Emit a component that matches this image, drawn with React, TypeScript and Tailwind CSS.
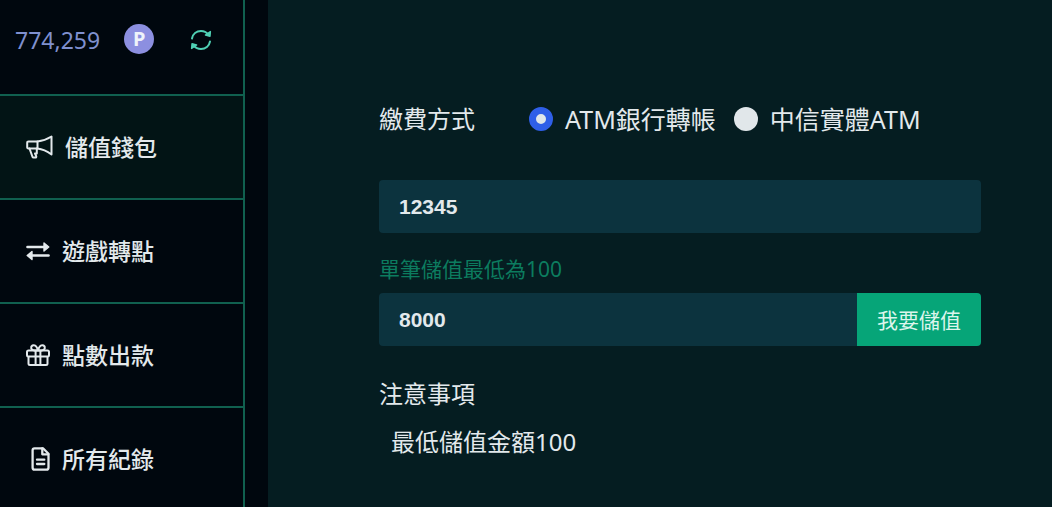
import { useState } from "react";
import type { ReactNode } from "react";

function MegaphoneIcon() {
  return (
    <svg width="27" height="26" viewBox="0 0 27 26" fill="none" stroke="currentColor" strokeWidth="2" strokeLinejoin="round" strokeLinecap="round">
      <path d="M2.500 7.500H11.500V14.500H2.500C1.600 14.500 1.200 14 1.200 13.200V8.800C1.200 7.900 1.600 7.500 2.500 7.500Z" />
      <path d="M11.500 7.500C16 7 21.500 5 25.500 2.500V20.500C21.500 17.500 16 15 11.500 14.500" />
      <path d="M3.500 14.500L6.500 22.800C6.700 23.300 7 23.500 7.500 23.500H9.300C10.200 23.500 10.500 22.900 10.200 22.200L9 19.500H10.800V14.500" />
    </svg>
  );
}

function TransferIcon() {
  return (
    <svg width="24" height="24" viewBox="0 0 24 24" fill="currentColor" stroke="currentColor" strokeLinejoin="round" strokeLinecap="round">
      <path d="M1.500 8H18" strokeWidth="2.600" fill="none" />
      <path d="M18 4L22.800 8L18 12Z" strokeWidth="1.400" />
      <path d="M6 16.500H22.500" strokeWidth="2.600" fill="none" />
      <path d="M6 12.500L1.200 16.500L6 20.500Z" strokeWidth="1.400" />
    </svg>
  );
}

function GiftIcon() {
  return (
    <svg width="24" height="24" viewBox="0 0 24 24" fill="none" stroke="currentColor" strokeWidth="2" strokeLinejoin="round">
      <rect x="1" y="7.500" width="22" height="6" rx="1.500" />
      <path d="M2.500 13.500V20.500C2.500 21.600 3 22 4 22H20C21 22 21.500 21.600 21.500 20.500V13.500" />
      <path d="M9.600 7.500V22M14.400 7.500V22" />
      <path d="M12 7.500C10.500 7.500 5.800 8 5.200 5.200C4.700 2.600 7.600 1.400 9.500 2.800C11 3.900 11.600 6 12 7.500C12.400 6 13 3.900 14.500 2.800C16.400 1.400 19.300 2.600 18.800 5.200C18.200 8 13.500 7.500 12 7.500Z" />
    </svg>
  );
}

function RecordIcon() {
  return (
    <svg width="24" height="24" viewBox="0 0 24 24" fill="none" stroke="currentColor" strokeWidth="2.300" strokeLinejoin="round" strokeLinecap="round">
      <path d="M8.500 1.300H17L22.500 6.800V20.500C22.500 22 21.800 22.700 20.500 22.700H8.500C7.200 22.700 6.600 22 6.600 20.500V3.300C6.600 2 7.200 1.300 8.500 1.300Z" />
      <path d="M16.300 1.500V7.300H22.300" />
      <path d="M11 12.700H18.300M11 17H18.300" />
    </svg>
  );
}

function RefreshIcon() {
  return (
    <svg width="22" height="22" viewBox="0 0 22 22" fill="none" stroke="currentColor" strokeWidth="2" strokeLinecap="round">
      <path d="M2 9.500C2.800 5 6.500 2 11 2C14 2 16.500 3.200 18.200 5.400" />
      <path d="M20 12.500C19.200 17 15.500 20 11 20C8 20 5.500 18.800 3.800 16.600" />
      <path d="M20.400 2.600L20 7.200L15.400 6Z" fill="currentColor" strokeLinejoin="round" strokeWidth="1.400" />
      <path d="M1.600 19.400L2 14.800L6.600 16Z" fill="currentColor" strokeLinejoin="round" strokeWidth="1.400" />
    </svg>
  );
}

interface NavItem {
  label: string;
  icon: ReactNode;
  active?: boolean;
}

const navItems: NavItem[] = [
  { label: "儲值錢包", icon: <MegaphoneIcon />, active: true },
  { label: "遊戲轉點", icon: <TransferIcon /> },
  { label: "點數出款", icon: <GiftIcon /> },
  { label: "所有紀錄", icon: <RecordIcon /> },
];

const methods = [
  { value: "transfer", label: "ATM銀行轉帳" },
  { value: "ctbc", label: "中信實體ATM" },
];

function Sidebar() {
  return (
    <aside className="w-[245px] shrink-0 border-r-2 border-[#10604f]">
      <div className="flex h-[94px] items-start pl-[15px] pt-6 text-[23px] leading-8 text-[#7f90cf]">
        <span>774,259</span>
        <span className="ml-6 flex size-[30px] items-center justify-center rounded-full bg-[#8c8fe0] text-xl font-bold text-[#eef3fa]">
          P
        </span>
        <button type="button" aria-label="重新整理" className="ml-9 flex h-8 items-center text-[#4fd0b4]">
          <RefreshIcon />
        </button>
      </div>
      <nav>
        {navItems.map((item) => (
          <a
            key={item.label}
            href="#"
            className={`flex h-[104px] items-center gap-3 border-t-2 border-[#10604f] pl-[26px] text-[23px] font-medium leading-8 text-[#e3e9ec] ${
              item.active ? "bg-[#021415]" : ""
            }`}
          >
            {item.icon}
            <span>{item.label}</span>
          </a>
        ))}
      </nav>
    </aside>
  );
}

export default function App() {
  const [method, setMethod] = useState("transfer");
  const [account, setAccount] = useState("12345");
  const [amount, setAmount] = useState("8000");

  return (
    <div className="flex h-screen overflow-hidden bg-[#00070e] font-['Noto_Sans','Noto_Sans_CJK_TC',sans-serif]">
      <Sidebar />
      <main className="ml-[23px] min-w-0 flex-1 bg-[#051d21] pl-[111px] pr-[71px] pt-[103px] text-2xl leading-8 text-[#e3e9ec]">
        <form onSubmit={(e) => e.preventDefault()}>
          <fieldset className="flex items-center">
            <legend className="float-left mr-[54px]">繳費方式</legend>
            <div className="flex gap-[18px] text-[25px] leading-8">
              {methods.map((m) => (
                <label key={m.value} className="flex items-center gap-3">
                  <input
                    type="radio"
                    name="method"
                    value={m.value}
                    checked={method === m.value}
                    onChange={() => setMethod(m.value)}
                    className="size-6 appearance-none rounded-full bg-[#e1e7ea] checked:border-[7px] checked:border-[#2f5fe8]"
                  />
                  <span>{m.label}</span>
                </label>
              ))}
            </div>
          </fieldset>
          <input
            type="text"
            aria-label="帳號"
            value={account}
            onChange={(e) => setAccount(e.target.value)}
            className="mt-[45px] block h-[53px] w-full rounded-sm bg-[#0c333e] px-5 font-['Liberation_Sans',sans-serif] text-[21px] font-bold outline-none"
          />
          <label htmlFor="amount" className="mt-5 block text-[21px] leading-8 text-[#0c7c5f]">
            單筆儲值最低為100
          </label>
          <div className="mt-2 flex h-[53px]">
            <input
              id="amount"
              type="text"
              value={amount}
              onChange={(e) => setAmount(e.target.value)}
              className="min-w-0 flex-1 rounded-l-sm bg-[#0c333e] px-5 font-['Liberation_Sans',sans-serif] text-[21px] font-bold outline-none"
            />
            <button type="submit" className="w-[124px] rounded-r-sm bg-[#06a578] text-[21px] text-[#dcf5ec]">
              我要儲值
            </button>
          </div>
        </form>
        <section className="mt-8">
          <h2>注意事項</h2>
          <p className="ml-3 mt-4">最低儲值金額100</p>
        </section>
      </main>
    </div>
  );
}
